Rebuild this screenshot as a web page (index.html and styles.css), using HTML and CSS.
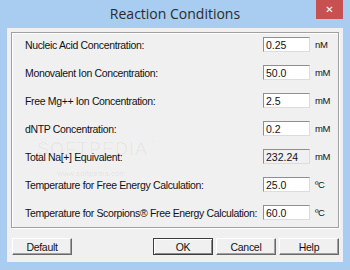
FILE: index.html
```html
<!DOCTYPE html>
<html>
	<head>
		<link rel="stylesheet" href="styles.css">
	</head>

	<body>
		<div class = "window">
			<div class = "titlebar">
				<span class = "title">Reaction Conditions</span>
				<button class = "close-btn">✕</button>
			</div>

			<div class = "client">
				<div class = "panel">
					<div class = "row">
						<label class = "field-label">Nucleic Acid Concentration:</label>
						<input class = "field" type = "text" value = "0.25">
						<span class = "unit">nM</span>
					</div>
					<div class = "row">
						<label class = "field-label">Monovalent Ion Concentration:</label>
						<input class = "field" type = "text" value = "50.0">
						<span class = "unit">mM</span>
					</div>
					<div class = "row">
						<label class = "field-label">Free Mg++ Ion Concentration:</label>
						<input class = "field" type = "text" value = "2.5">
						<span class = "unit">mM</span>
					</div>
					<div class = "row">
						<label class = "field-label">dNTP Concentration:</label>
						<input class = "field" type = "text" value = "0.2">
						<span class = "unit">mM</span>
					</div>
					<div class = "row">
						<label class = "field-label">Total Na[+] Equivalent:</label>
						<input class = "field readonly" type = "text" value = "232.24" readonly>
						<span class = "unit">mM</span>
					</div>
					<div class = "row">
						<label class = "field-label">Temperature for Free Energy Calculation:</label>
						<input class = "field" type = "text" value = "25.0">
						<span class = "unit">ºC</span>
					</div>
					<div class = "row">
						<label class = "field-label">Temperature for Scorpions® Free Energy Calculation:</label>
						<input class = "field" type = "text" value = "60.0">
						<span class = "unit">ºC</span>
					</div>

					<div class = "watermark">SOFTPEDIA<span class = "tm">™</span></div>
					<div class = "watermark-url">www.softpedia.com</div>
				</div>

				<div class = "buttons">
					<button class = "btn btn-left">Default</button>
					<button class = "btn btn-default">OK</button>
					<button class = "btn">Cancel</button>
					<button class = "btn">Help</button>
				</div>
			</div>
		</div>
	</body>
</html>
```

FILE: styles.css
```css
body {
	margin: 0;
	background: #a9ccf1;
}

.window {
	width: 350px;
	height: 270px;
	box-sizing: border-box;
	padding: 0 7px 8px 7px;
	display: flex;
	flex-direction: column;
	background: #a9ccf1;
	font-family: "Liberation Sans", Arial, sans-serif;
}

.titlebar {
	position: relative;
	height: 28px;
	display: flex;
	align-items: center;
	justify-content: center;
}

.title {
	font-family: "Open Sans", "Noto Sans", sans-serif;
	font-size: 14px;
	color: #2b2b2b;
	margin-top: -1px;
}

.close-btn {
	position: absolute;
	top: 0;
	right: 0;
	width: 27px;
	height: 19px;
	border: none;
	padding: 0;
	background: #c75050;
	color: white;
	font-family: "DejaVu Sans", sans-serif;
	font-size: 10px;
	font-weight: bold;
}

.client {
	flex: 1;
	background: #f0f0f0;
	padding: 4px;
	display: flex;
	flex-direction: column;
}

.panel {
	position: relative;
	height: 196px;
	box-sizing: border-box;
	border: 1px solid #a0a0a0;
	box-shadow: 1px 1px 0 #fff, inset 1px 1px 0 #fff;
	padding: 4px 0 0 13px;
	display: flex;
	flex-direction: column;
	gap: 13px;
}

.row {
	display: flex;
	align-items: center;
	height: 15px;
}

.field-label {
	flex: 1;
	font-size: 10.5px;
	letter-spacing: -0.35px;
	color: #101018;
	white-space: nowrap;
}

.field {
	width: 47px;
	height: 15px;
	box-sizing: border-box;
	margin: 0;
	padding: 0 2px;
	border: 1px solid;
	border-color: #8f8f8f #dcdcdc #dcdcdc #8f8f8f;
	background: white;
	font-family: "Liberation Sans", Arial, sans-serif;
	font-size: 10.5px;
	color: #101018;
	outline: none;
}

.field.readonly {
	background: #f0f0f0;
}

.unit {
	width: 23px;
	margin-left: 5px;
	font-size: 9.5px;
	letter-spacing: -0.4px;
	color: #101018;
}

.watermark {
	position: absolute;
	left: 25px;
	top: 106px;
	font-family: "Liberation Sans", sans-serif;
	font-size: 18px;
	letter-spacing: 1px;
	color: rgba(0, 0, 0, 0.05);
}

.watermark .tm {
	font-size: 8px;
	vertical-align: top;
}

.watermark-url {
	position: absolute;
	left: 45px;
	top: 136px;
	font-family: "Liberation Sans", sans-serif;
	font-size: 8px;
	color: rgba(0, 0, 0, 0.08);
}

.buttons {
	display: flex;
	gap: 3px;
	margin-top: 10px;
	padding: 0 0 0 1px;
}

.btn {
	width: 60px;
	height: 17px;
	box-sizing: border-box;
	padding: 0;
	border: 1px solid;
	border-color: #fff #696969 #696969 #fff;
	box-shadow: inset -1px -1px 0 #a0a0a0;
	background: #f0f0f0;
	font-family: "Liberation Sans", Arial, sans-serif;
	font-size: 10.5px;
	letter-spacing: -0.3px;
	color: #101018;
}

.btn-left {
	margin-right: auto;
}

.btn-default {
	border-color: #3c3c3c;
	box-shadow: inset 1px 1px 0 #fff, inset -1px -1px 0 #8a8a8a;
}
```
